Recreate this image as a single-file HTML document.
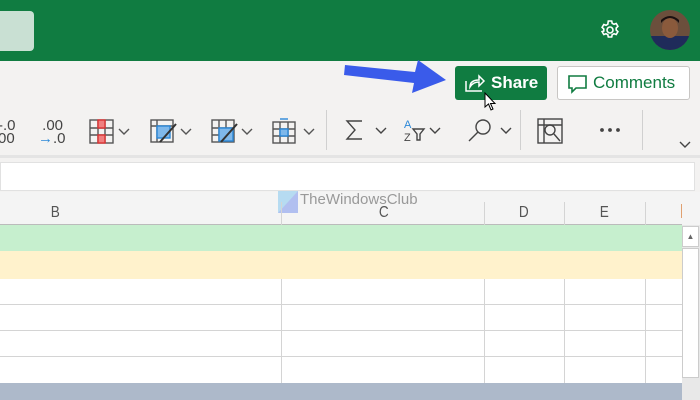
<!DOCTYPE html>
<html><head><style>
*{margin:0;padding:0;box-sizing:border-box}
body{width:700px;height:400px;overflow:hidden;position:relative;background:#f3f2f1;font-family:"Liberation Sans",sans-serif}
.abs{position:absolute}
</style></head><body>
<div class="abs" style="left:0;top:0;width:700px;height:61px;background:#107c41"></div>
<div class="abs" style="left:0;top:11px;width:34px;height:40px;background:#c9e0d3;border-radius:0 4px 4px 0"></div>
<svg class="abs" style="left:598px;top:18px" width="24" height="24" viewBox="0 0 24 24" fill="none" stroke="#fff" stroke-width="1.6"><circle cx="12" cy="12" r="3"/><path d="M10.3 3h3.4l.5 2.3 1.8 1 2.2-.8 1.7 2.9-1.7 1.6v2l1.7 1.6-1.7 2.9-2.2-.8-1.8 1-.5 2.3h-3.4l-.5-2.3-1.8-1-2.2.8-1.7-2.9L5.8 13v-2L4.1 9.4l1.7-2.9 2.2.8 1.8-1z"/></svg>
<svg class="abs" style="left:650px;top:10px" width="40" height="40"><defs><clipPath id="c"><circle cx="20" cy="20" r="20"/></clipPath></defs><g clip-path="url(#c)"><rect width="40" height="40" fill="#6b4f3c"/><rect y="26" width="40" height="14" fill="#1f2b5a"/><ellipse cx="20" cy="18" rx="8" ry="10" fill="#8a5a3c"/><path d="M11 13q9-10 18 0v-3q-9-8-18 0z" fill="#1a1010"/></g></svg>
<svg class="abs" style="left:340px;top:58px" width="110" height="38"><path d="M5 7 L75 14 L78 2 L106 22 L72 35 L74 25 L4 17Z" fill="#3a5bea"/></svg>
<div class="abs" style="left:455px;top:66px;width:92px;height:34px;background:#107c41;border-radius:3px;color:#fff;font-weight:bold;font-size:17px;line-height:34px;padding-left:36px">Share</div>
<svg class="abs" style="left:464px;top:73px" width="22" height="20" fill="none" stroke="#fff" stroke-width="1.5"><path d="M2 8v10h16M6 14q0-7 9-7V3l5 5-5 5V9q-6 0-9 5z"/></svg>
<svg class="abs" style="left:484px;top:92px" width="14" height="20"><path d="M1 1v14l3.5-3 2.5 6 2-1-2.5-5.5H11z" fill="#fff" stroke="#000"/></svg>
<div class="abs" style="left:557px;top:66px;width:133px;height:34px;background:#fff;border:1px solid #c8c6c4;border-radius:3px;color:#107c41;font-size:17px;line-height:32px;padding-left:35px">Comments</div>
<svg class="abs" style="left:567px;top:74px" width="22" height="20" fill="none" stroke="#107c41" stroke-width="1.6"><path d="M2 2h17v12H9l-4 4v-4H2z"/></svg>
<!-- toolbar -->
<div class="abs" style="left:-2px;top:119px;font-size:15px;line-height:13px;color:#444">-.0<br>00</div>
<div class="abs" style="left:38px;top:119px;font-size:15px;line-height:13px;color:#444">&nbsp;.00<br><span style="color:#2b88d8">→</span>.0</div>
<svg class="abs" style="left:88px;top:118px" width="240" height="28" fill="none" stroke="#555" stroke-width="1.4">
<rect x="2" y="2" width="23" height="23"/><path d="M2 10h23M2 17h23M10 2v23M17 2v23"/><rect x="10" y="2" width="7" height="8" fill="#f08080" stroke="#d33"/><rect x="10" y="17" width="7" height="8" fill="#f08080" stroke="#d33"/>
<path d="M31 11l5 5 5-5"/>
<rect x="63" y="2" width="22" height="22"/><path d="M63 8h22M69 2v22"/><rect x="69" y="8" width="13" height="12" fill="#7fb8ea" stroke="#2b88d8"/><path d="M88 6l-16 18" stroke="#333" stroke-width="2"/>
<path d="M93 11l5 5 5-5"/>
<rect x="124" y="2" width="22" height="22"/><path d="M124 10h22M124 17h22M131 2v22M138 2v22"/><rect x="131" y="10" width="14" height="13" fill="#7fb8ea" stroke="#2b88d8"/><path d="M149 6l-16 18" stroke="#333" stroke-width="2"/>
<path d="M154 11l5 5 5-5"/>
<rect x="185" y="4" width="22" height="21"/><path d="M185 11h22M185 18h22M192 4v21M200 4v21"/><rect x="192" y="11" width="8" height="7" fill="#7fb8ea" stroke="#2b88d8"/><path d="M192 1h8" stroke="#2b88d8"/>
<path d="M216 11l5 5 5-5"/>
</svg>
<div class="abs" style="left:326px;top:110px;width:1px;height:40px;background:#d0d0d0"></div>
<svg class="abs" style="left:340px;top:116px" width="360" height="40" fill="none" stroke="#444" stroke-width="1.4">
<path d="M22 5H7l8 9-8 9h15"/><path d="M36 12l5 5 5-5"/>
<text x="64" y="12" font-size="11" fill="#2b88d8" stroke="none" font-family="Liberation Sans">A</text><text x="64" y="25" font-size="11" fill="#444" stroke="none" font-family="Liberation Sans">Z</text><path d="M73 13h11l-4 5v6h-3v-6z"/><path d="M90 12l5 5 5-5"/>
<circle cx="143" cy="11" r="7"/><path d="M138 16l-9 9"/><path d="M161 12l5 5 5-5"/>
<rect x="198" y="3" width="24" height="24"/><path d="M198 9h24M204 3v24"/><circle cx="210" cy="14" r="5"/><path d="M214 18l6 7"/>
<circle cx="262" cy="14" r="1.2" fill="#444"/><circle cx="270" cy="14" r="1.2" fill="#444"/><circle cx="278" cy="14" r="1.2" fill="#444"/>
<path d="M340 26l5 5 5-5"/>
</svg>
<div class="abs" style="left:520px;top:110px;width:1px;height:40px;background:#d0d0d0"></div>
<div class="abs" style="left:642px;top:110px;width:1px;height:40px;background:#d0d0d0"></div>
<div class="abs" style="left:0;top:155px;width:700px;height:3px;background:#e4e4e4"></div>
<!-- formula bar -->
<div class="abs" style="left:0;top:162px;width:695px;height:29px;background:#fff;border:1px solid #e1e1e1"></div>
<!-- headers -->
<div class="abs" style="left:0;top:192px;width:700px;height:33px;background:#f4f4f4"></div>
<div class="abs" style="left:0;top:224px;width:682px;height:1px;background:#bbb"></div>
<svg class="abs" style="left:278px;top:191px" width="20" height="22"><rect width="20" height="22" fill="#a6d4f0" opacity=".8"/><path d="M0 22L20 0v22z" fill="#b0b8f0" opacity=".8"/></svg>
<div class="abs" style="left:300px;top:191px;font-size:15px;color:#999">TheWindowsClub</div>
<div class="abs" style="left:50px;top:204px;font-size:16px;color:#555;transform:scaleX(.85)">B</div>
<div class="abs" style="left:378px;top:204px;font-size:16px;color:#555;transform:scaleX(.85)">C</div>
<div class="abs" style="left:518px;top:204px;font-size:16px;color:#555;transform:scaleX(.85)">D</div>
<div class="abs" style="left:599px;top:204px;font-size:16px;color:#555;transform:scaleX(.85)">E</div>
<div class="abs" style="left:681px;top:204px;width:1px;height:14px;background:#e0a070"></div>
<!-- rows -->
<div class="abs" style="left:0;top:225px;width:682px;height:26px;background:#c6efce"></div>
<div class="abs" style="left:0;top:251px;width:682px;height:28px;background:#fff2cc"></div>
<div class="abs" style="left:0;top:279px;width:682px;height:104px;background:#fff"></div>
<div class="abs" style="left:0;top:304px;width:682px;height:1px;background:#d4d4d4"></div>
<div class="abs" style="left:0;top:330px;width:682px;height:1px;background:#d4d4d4"></div>
<div class="abs" style="left:0;top:356px;width:682px;height:1px;background:#d4d4d4"></div>
<div class="abs" style="left:281px;top:202px;width:1px;height:23px;background:#d4d4d4"></div>
<div class="abs" style="left:484px;top:202px;width:1px;height:23px;background:#d4d4d4"></div>
<div class="abs" style="left:564px;top:202px;width:1px;height:23px;background:#d4d4d4"></div>
<div class="abs" style="left:645px;top:202px;width:1px;height:23px;background:#d4d4d4"></div>
<div class="abs" style="left:281px;top:279px;width:1px;height:104px;background:#d4d4d4"></div>
<div class="abs" style="left:484px;top:279px;width:1px;height:104px;background:#d4d4d4"></div>
<div class="abs" style="left:564px;top:279px;width:1px;height:104px;background:#d4d4d4"></div>
<div class="abs" style="left:645px;top:279px;width:1px;height:104px;background:#d4d4d4"></div>
<div class="abs" style="left:0;top:383px;width:682px;height:17px;background:#adb9ca"></div>
<!-- scrollbar -->
<div class="abs" style="left:682px;top:225px;width:18px;height:175px;background:#e8e8e8"></div>
<div class="abs" style="left:682px;top:226px;width:17px;height:21px;background:#fff;border:1px solid #ccc;font-size:8px;color:#666;text-align:center;line-height:19px">▲</div>
<div class="abs" style="left:682px;top:248px;width:17px;height:130px;background:#fff;border:1px solid #ccc"></div>
</body></html>
